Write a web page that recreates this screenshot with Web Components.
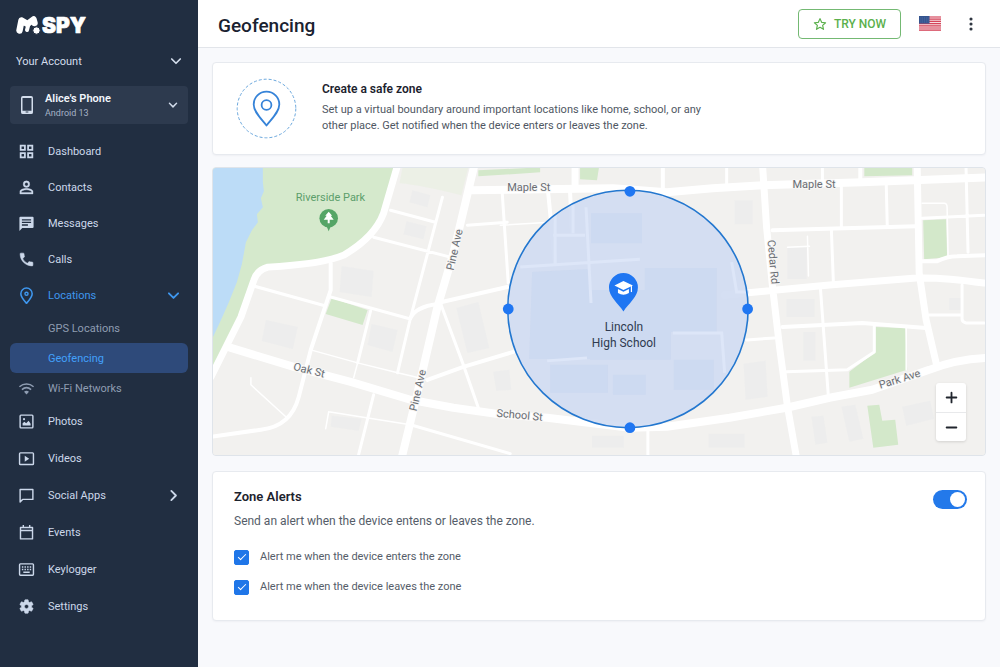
<!DOCTYPE html>
<html lang="en">
<head>
<meta charset="utf-8">
<meta name="viewport" content="width=device-width, initial-scale=1">
<title>Geofencing</title>
<style>
  html, body { margin: 0; }
  body { font-family: Roboto, "Liberation Sans", sans-serif; font-size: 11px; color: #1b2230; background: #f8f9fc; }
</style>
</head>
<body>
<spy-app></spy-app>

<script>
const ICONS = {
  dashboard: '<path fill-rule="evenodd" d="M2.500 2.500h8.500v8.500H2.500zm2.500 2.500v3.500h3.500V5zM13 2.500h8.500v8.500H13zm2.500 2.500v3.500H19V5zM2.500 13h8.500v8.500H2.500zM5 15.500V19h3.500v-3.500zM13 13h8.500v8.500H13zm2.500 2.500V19H19v-3.500z"/>',
  contacts: '<path d="M12 5.900a2.100 2.100 0 1 1 0 4.200 2.100 2.100 0 0 1 0-4.200m0 9c3 0 6.100 1.500 6.100 2.100v1.100H5.900V17c0-.6 3.100-2.100 6.100-2.100M12 4a4 4 0 1 0 0 8 4 4 0 0 0 0-8m0 9c-2.700 0-8 1.300-8 4v3h16v-3c0-2.700-5.300-4-8-4" transform="translate(-2 -2) scale(1.160)" stroke="currentColor" stroke-width=".4"/>',
  messages: '<path fill-rule="evenodd" d="M3.500 2.500h17A1.500 1.500 0 0 1 22 4v13a1.500 1.500 0 0 1-1.500 1.500H6L2 22.500V4a1.500 1.500 0 0 1 1.500-1.500zM5.500 6v1.800h13V6zm0 3.600v1.800h13V9.600zm0 3.600V15H14v-1.800z"/>',
  calls: '<path d="M6.600 10.800c1.400 2.800 3.800 5.100 6.600 6.600l2.200-2.200c.3-.3.700-.4 1-.2 1.100.4 2.300.6 3.600.6.600 0 1 .4 1 1V20c0 .6-.4 1-1 1C10.600 21 3 13.400 3 4c0-.6.400-1 1-1h3.500c.6 0 1 .4 1 1 0 1.200.2 2.400.6 3.600.1.300 0 .7-.2 1z" stroke="currentColor" stroke-width=".8"/>',
  pin: '<path d="M12 23C8.500 19 4 14.300 4 9.500a8 8 0 0 1 16 0c0 4.800-4.500 9.500-8 13.500z" fill="none" stroke="currentColor" stroke-width="2.200" stroke-linejoin="round"/><circle cx="12" cy="9.500" r="2.200" fill="none" stroke="currentColor" stroke-width="2"/>',
  wifi: '<path d="M2 9.500c6-5 14-5 20 0M5.500 13.500c4-3.300 9-3.300 13 0" fill="none" stroke="currentColor" stroke-width="2.200"/><path d="M8.500 16.500c2.200-1.800 4.800-1.800 7 0L12 20.500z"/>',
  photos: '<rect x="3" y="3" width="18" height="18" rx="1.200" fill="none" stroke="currentColor" stroke-width="2"/><path d="M6.500 17.500v-3l2.500-2 2.500 2 3.500-3.500 2.800 4v2.500z"/><circle cx="8.500" cy="8.700" r="1.500"/>',
  videos: '<rect x="2.200" y="4" width="19.600" height="16.500" rx="1.200" fill="none" stroke="currentColor" stroke-width="2"/><path d="M9.500 8v8.500l6.300-4.200z"/>',
  social: '<path d="M3 3.500h18v14H6.500L3 21z" fill="none" stroke="currentColor" stroke-width="2" stroke-linejoin="round"/>',
  events: '<path d="M3.500 5h17v16h-17zM3.500 9.200h17M7.500 1.500V5M16.500 1.500V5" fill="none" stroke="currentColor" stroke-width="2" stroke-linejoin="round"/>',
  keylogger: '<rect x="2.200" y="4" width="19.600" height="16" rx="1.200" fill="none" stroke="currentColor" stroke-width="2"/><path d="M5.500 7.500h2v2h-2zm3.700 0h2v2h-2zm3.700 0h2v2h-2zm3.700 0h2v2h-2zM5.500 11h2v2h-2zm3.700 0h2v2h-2zm3.700 0h2v2h-2zm3.700 0h2v2h-2zM7.500 14.800h9v2h-9z"/>',
  settings: '<path d="M19.140 12.940c.04-.3.060-.61.060-.94 0-.32-.02-.64-.07-.94l2.030-1.580a.49.490 0 0 0 .12-.61l-1.920-3.320a.49.490 0 0 0-.59-.22l-2.390.96c-.5-.38-1.030-.7-1.620-.94l-.36-2.540a.48.480 0 0 0-.48-.41h-3.840c-.24 0-.43.170-.47.410l-.36 2.540c-.59.240-1.130.570-1.620.940l-2.390-.96c-.22-.08-.47 0-.59.220L2.740 8.870c-.12.210-.08.470.12.610l2.030 1.580c-.05.300-.09.630-.09.940s.02.640.070.940l-2.030 1.580a.49.490 0 0 0-.12.610l1.920 3.320c.12.220.370.290.590.220l2.390-.96c.5.380 1.030.7 1.620.940l.36 2.540c.05.240.240.410.480.410h3.840c.24 0 .44-.17.470-.41l.36-2.540c.59-.24 1.130-.56 1.620-.94l2.390.96c.22.080.470 0 .59-.22l1.920-3.320a.49.490 0 0 0-.12-.61zM12 15a3 3 0 1 1 0-6 3 3 0 0 1 0 6z" stroke="currentColor" stroke-width=".8"/>',
  phone: '<path fill-rule="evenodd" d="M6.500 0h11A2.500 2.500 0 0 1 20 2.500v19a2.500 2.500 0 0 1-2.500 2.500h-11A2.500 2.500 0 0 1 4 21.500v-19A2.500 2.500 0 0 1 6.500 0zM6 2.800v16.700h12V2.800zm4.200 17.700V22h3.600v-1.500z"/>',
  down: '<path d="M3.500 8 12 16.500 20.500 8" fill="none" stroke="currentColor" stroke-width="3.400" stroke-linecap="round" stroke-linejoin="round"/>',
  right: '<path d="M8 3.500l8.500 8.500L8 20.500" fill="none" stroke="currentColor" stroke-width="3.400" stroke-linecap="round" stroke-linejoin="round"/>',
  star: '<path d="M12 2.800l2.800 6.300 6.800.7-5.100 4.600 1.500 6.800-6-3.500-6 3.500 1.500-6.800-5.100-4.600 6.800-.7z" fill="none" stroke="currentColor" stroke-width="2" stroke-linejoin="round"/>',
  more: '<circle cx="12" cy="3.500" r="2.700"/><circle cx="12" cy="12" r="2.700"/><circle cx="12" cy="20.500" r="2.700"/>',
  plus: '<path d="M12 3v18M3 12h18" stroke="currentColor" stroke-width="3.400" stroke-linecap="round"/>',
  minus: '<path d="M3 12h18" stroke="currentColor" stroke-width="3.400" stroke-linecap="round"/>'
};

function define(name, html, setup) {
  const template = document.createElement('template');
  template.innerHTML = html;
  customElements.define(name, class extends HTMLElement {
    constructor() {
      super();
      this.attachShadow({ mode: 'open' }).append(template.content.cloneNode(true));
    }
    connectedCallback() { if (setup) setup(this, this.shadowRoot); }
  });
}

define('spy-icon', `
<style>
  :host { display: inline-flex; flex: none; width: var(--size, 18px); height: var(--size, 18px); }
  svg { width: 100%; height: 100%; fill: currentColor; }
</style>
<svg viewBox="0 0 24 24" aria-hidden="true"></svg>`,
(host, root) => { root.querySelector('svg').innerHTML = ICONS[host.getAttribute('name')] || ''; });

define('spy-logo', `
<style>
  :host { display: block; height: 32px; }
  svg { display: block; width: 90px; height: 32px; }
  text { font: 900 21px Inter, "Liberation Sans", sans-serif; fill: #fff; stroke: #fff; stroke-width: .7; stroke-linejoin: round; }
</style>
<svg viewBox="0 0 90 32" role="img" aria-label="mSpy">
  <path d="M3.500 21.500 5.500 11.500 11.500 15 17.500 10.500 18.500 14" fill="none" stroke="#fff" stroke-width="6.400" stroke-linecap="round" stroke-linejoin="round"/>
  <path d="M12 17 11 21" stroke="#fff" stroke-width="4" stroke-linecap="round"/>
  <circle cx="20.500" cy="21.500" r="3.700" fill="#fff" stroke="#212e41"/>
  <text x="26" y="24">SPY</text>
</svg>`);

define('nav-item', `
<style>
  :host { display: block; }
  a { display: flex; align-items: center; gap: 13px; height: var(--row, 36px); padding: 0 8px; border-radius: 6px;
      color: #ccd8ea; font-size: 11px; text-decoration: none; }
  .label { flex: 1; }
  .icon { display: flex; width: 17px; --size: 17px; }
  .arrow { --size: 13px; display: flex; }
  :host([sub]) a { height: 30px; color: #8f9db2; }
  :host([open]) a { color: #3f97ee; }
  :host([current]) a { background: #2e4a7a; color: #42a0fa; }
</style>
<a href="#"><span class="icon"></span><span class="label"><slot></slot></span><span class="arrow"></span></a>`,
(host, root) => {
  const put = (cls, name) => { if (name) root.querySelector(cls).innerHTML = '<spy-icon name="' + name + '"></spy-icon>'; };
  put('.icon', host.getAttribute('icon'));
  put('.arrow', host.getAttribute('arrow'));
  if (host.hasAttribute('current')) root.querySelector('a').setAttribute('aria-current', 'page');
});

define('spy-sidebar', `
<style>
  :host { display: block; box-sizing: border-box; background: #212e41; color: #d3ddec; padding: 9px 10px 24px; }
  spy-logo { margin-left: 6px; }
  button { display: flex; align-items: center; width: 100%; border: 0; background: none; color: inherit; font: inherit; text-align: left; cursor: pointer; }
  .account { height: 24px; margin: 8px 0 13px; padding: 0 6px; --size: 12px; }
  .account span { flex: 1; }
  .device { box-sizing: border-box; height: 38px; padding: 0 10px 0 8px; gap: 9px; border-radius: 4px; background: #2d3a4e; }
  .device .phone { --size: 18px; }
  .device .caret { --size: 10px; }
  .device > span { flex: 1; display: grid; gap: 2px; }
  strong { font-weight: 600; font-size: 11px; line-height: 13px; color: #f2f6fc; }
  small { font-size: 9px; line-height: 12px; color: #a5b2c6; }
  nav { margin-top: 9px; }
  .lower { --row: 37px; }
</style>
<spy-logo></spy-logo>
<button class="account" type="button"><span>Your Account</span><spy-icon name="down"></spy-icon></button>
<button class="device" type="button">
  <spy-icon class="phone" name="phone"></spy-icon>
  <span><strong>Alice's Phone</strong><small>Android 13</small></span>
  <spy-icon class="caret" name="down"></spy-icon>
</button>
<nav aria-label="Main">
  <nav-item icon="dashboard">Dashboard</nav-item>
  <nav-item icon="contacts">Contacts</nav-item>
  <nav-item icon="messages">Messages</nav-item>
  <nav-item icon="calls">Calls</nav-item>
  <nav-item icon="pin" arrow="down" open>Locations</nav-item>
  <nav-item sub>GPS Locations</nav-item>
  <nav-item sub current>Geofencing</nav-item>
  <nav-item sub icon="wifi">Wi-Fi Networks</nav-item>
  <div class="lower">
    <nav-item icon="photos">Photos</nav-item>
    <nav-item icon="videos">Videos</nav-item>
    <nav-item icon="social" arrow="right">Social Apps</nav-item>
    <nav-item icon="events">Events</nav-item>
    <nav-item icon="keylogger">Keylogger</nav-item>
    <nav-item icon="settings">Settings</nav-item>
  </div>
</nav>`);

define('us-flag', `
<style>
  :host { display: block; width: 22px; height: 15px; }
  svg { display: block; width: 100%; height: 100%; }
</style>
<svg viewBox="0 0 22 15" role="img" aria-label="United States">
  <rect width="22" height="15" fill="#f6dfe2"/>
  <path d="M0 1h22M0 3.200h22M0 5.400h22M0 7.600h22M0 9.800h22M0 12h22M0 14.200h22" stroke="#d5445a" stroke-width="1.200"/>
  <rect width="10.500" height="7.600" fill="#34548f"/>
  <path d="M1.500 2h8M1.500 4h8M1.500 6h8" stroke="#6d88bb" stroke-width=".6" stroke-dasharray=".8 1"/>
</svg>`);

define('page-header', `
<style>
  :host { display: flex; align-items: center; box-sizing: border-box; height: 48px; padding: 0 19px 0 20px; background: #fff; border-bottom: 1px solid #e2e5ea; }
  h1 { flex: 1; margin: 0; padding-top: 4px; font-size: 19px; line-height: 24px; font-weight: 500; color: #1a2230; }
  button { font: inherit; cursor: pointer; background: none; border: 0; padding: 0; }
  .try { display: flex; align-items: center; justify-content: center; gap: 7px; box-sizing: border-box; width: 103px; height: 30px;
         border: 1px solid #74b973; border-radius: 4px; color: #5bb04c; font-size: 12px; font-weight: 500; --size: 14px; }
  us-flag { margin: 0 20px 0 18px; }
  .more { display: flex; justify-content: center; width: 20px; color: #2f3641; --size: 14px; }
</style>
<h1><slot></slot></h1>
<button class="try" type="button"><spy-icon name="star"></spy-icon>TRY NOW</button>
<us-flag></us-flag>
<button class="more" type="button" aria-label="More"><spy-icon name="more"></spy-icon></button>`);

define('panel-card', `
<style>
  :host { display: block; background: #fff; border: 1px solid #e7eaef; border-radius: 4px; box-shadow: 0 1px 2px #1b22300a; }
</style>
<slot></slot>`);

define('safe-zone', `
<style>
  :host { display: block; }
  .row { display: flex; align-items: flex-start; gap: 25px; padding: 15px 23px; }
  .row > div { padding-top: 3px; }
  svg { flex: none; width: 61px; height: 61px; }
  h2 { margin: 0 0 5px; font-size: 12px; line-height: 16px; font-weight: 600; color: #1c222d; }
  p { margin: 0; max-width: 392px; font-size: 11px; line-height: 16px; color: #4f5763; }
</style>
<panel-card><div class="row">
  <svg viewBox="0 0 61 61" aria-hidden="true" fill="none" stroke="#3683d8">
    <circle cx="30.500" cy="30.500" r="29.300" stroke="#6aa7dd" stroke-dasharray="3 2"/>
    <path d="M30.500 47.500C24.500 40 17.700 33.500 17.700 26.500a12.800 12.800 0 0 1 25.600 0c0 7-6.800 13.500-12.800 21z" stroke-width="1.800" stroke-linejoin="round"/>
    <circle cx="30.500" cy="27" r="4.900" stroke-width="1.800"/>
  </svg>
  <div><h2>Create a safe zone</h2>
  <p>Set up a virtual boundary around important locations like home, school, or any other place. Get notified when the device enters or leaves the zone.</p></div>
</div></panel-card>`);

define('geo-map', `
<style>
  :host { display: block; position: relative; box-sizing: border-box; aspect-ratio: 774 / 289; overflow: hidden; border: 1px solid #dfe4ea; border-radius: 4px; background: #f2f1ef; }
  .map { display: block; width: 100%; height: 100%; }
  text { font-size: 11px; fill: #696d73; stroke: #f7f6f5; stroke-width: 2; paint-order: stroke; stroke-linejoin: round; }
  text.park { fill: #5c9e6b; stroke: none; }
  text.place { font-size: 12px; fill: #2f3b50; stroke: none; text-anchor: middle; }
  .zoom { position: absolute; right: 19px; bottom: 14px; display: grid; width: 30px; border-radius: 3px; background: #fff; box-shadow: 0 1px 3px #0002; }
  button { display: flex; align-items: center; justify-content: center; height: 29px; padding: 0; border: 0; background: none; color: #20252d; cursor: pointer; --size: 13px; }
  button + button { border-top: 1px solid #e8e9eb; }
</style>
<svg class="map" viewBox="212 167 774 289" preserveAspectRatio="xMidYMid slice" role="img" aria-label="Map of the zone around Lincoln High School">
  <rect x="212" y="167" width="774" height="289" fill="#f2f1ef"/>
  <path d="M212 167H395L383 213Q374 237 343 255Q322 264 267 267Q256 270 253 280L240 317 212 373z" fill="#d5e9cc"/>
  <path d="M212 167h50v15l1 9-3 7 2 9-6 7 1 8-6 8-6 12-4 22-5 18-8 20-8 18-8 17z" fill="#bcdcf7"/>
  <path d="M331 298l36 12-5 15-37-11zM865 167h48v8l-48 1zM924 220l23-1 1 38-23 2zM876 327l30 1 2 42-58 18v-16l26-20zM868 406l12-1 3 16 13-1 3 25-25 3zM580 167h19l-2 13-17-1zM478 170l62-3v5l-62 4z" fill="#d3e8ca"/>
  <path d="M402 167h66l-7 28q-40-10-62-12z" fill="#e9f0e2" opacity=".7"/>
  <path opacity=".4" fill="#e6e8ec" d="M412 190l18 5-3 12-18-5zM406 221l20 5-3 13-20-5zM341 266l32 5-2 26-32-5zM265 320l32 7-5 22-31-8zM371 324l26 6-5 22-25-7zM331 416l30 3-3 12-28-4zM456 308l22-6 11 46-22 5zM493 372l16-2 2 20-15 1zM735 200h18v24h-18zM788 247h19v32h-19zM787 299h28v18h-28zM804 332h12v29h-12zM744 364l22-3 2 36-22 3zM950 298h14v12h-14zM812 417l12-1 4 27-12 2zM842 407l14-2 8 34-14 3zM903 407l28-6 4 18-28 7zM709 434h36v14h-36zM592 436h32v12h-32z"/>
  <g fill="none" stroke="#fff" stroke-linejoin="round" stroke-linecap="round">
    <path stroke-width="1.500" d="M310 350l47 13 40 10M328 412l82 13M328 412l-3 17M250 378v7l35 32M353 378l4-15M923 203h22q3 0 3 4l1 50M788 247l22-1M808 236l1 40M500 225l50-3M397 373l30 7M907 328v42"/>
    <path stroke-width="3" d="M390 210l45 12M373 237l77 20M442 197l-32 121-13 55M253 286l72 20M330 297l80 22M370 311l-13 52M373 395l-15 60M410 425l100 29M502 193l6 90M467 225l40-3M440 303l23 62 15 43M842 187v40M887 185l1 40M832 230l2 53M821 288l8 109M787 372l61-2 27-18v-27M747 340l28-2M923 218l62-3M967 168l2 84M930 315h33M963 285v34q0 3 4 4h18M823 168v14M648 430v26M727 168v18"/>
    <path stroke-width="4" d="M330 263v27l-20 60-12 47q-8 30-38 33l-50 7M410 318q5-11 27-14M437 303l70-16M427 380l36-13 50-15M773 230l144-4M783 327l80-4 64 5M923 261h15q10-5 20-5l28-1M861 168v14M663 168v20M548 192l7 71M570 192l2 41"/>
    <path stroke-width="7" d="M397 165L383 213Q374 237 343 255Q322 264 267 267Q256 270 253 280L240 317 210 377M575 166v22M763 165l4 62 6 60 7 60 8 60 9 51M918 165l2 108 7 47 10 43M725 295l52-5 53-5 87-7q25-1 68 5"/>
    <path stroke-width="8" d="M230 348l63 19 57 15 60 18 43 8 50 7 44 3 83 10 37-1 63-9 57-10 43-10 43-8 57-20q28-11 60-12M474 165l-21 88-16 54-20 86-16 66M472 190l141-2 54 4 46-4 50-3 100-3 124-5"/>
  </g>
  <ellipse cx="628" cy="309" rx="120.500" ry="119" fill="#d1dcf2" fill-opacity=".92"/>
  <path fill="#c6d6f0" opacity=".5" d="M591 213h51v30h-51zM532 272l58-3v90h-61zM645 268h72v64h-72zM550 365h58v28h-58zM613 375h33v20h-33zM590 290h56v70h-56zM646 332h25v28h-25zM674 360h40v30h-40z"/>
  <path fill="none" stroke="#dde6f8" stroke-width="3" d="M520 267l120-8M553 235h32M555 215v48M573 205v28M586 207l5 96M673 333h49l3 40M547 361l40-3M732 262l5 30h12"/>
  <ellipse cx="628" cy="309" rx="120.500" ry="119" fill="none" stroke="#2377cf" stroke-width="1.600"/>
  <g fill="#1f76f2"><circle cx="630" cy="191" r="5.400"/><circle cx="630" cy="428" r="5.400"/><circle cx="508" cy="309" r="5.400"/><circle cx="748" cy="309" r="5.400"/>
    <path d="M623.500 311.500C618 303 609 297 609 287.500a14.500 14.500 0 0 1 29 0c0 9.500-9 15.500-14.500 24z"/></g>
  <path d="M614.500 285.500l9-4.500 9.500 4.500-9.500 4.500zM618 289l5.500 2.700 5.500-2.700v4q-5.500 3.500-11 0z" fill="#fff"/>
  <path d="M631.500 286v6" stroke="#fff" stroke-width="1.200"/>
  <circle cx="328" cy="218" r="9.300" fill="#55a566"/><path d="M325.500 225h5l-2.500 6z" fill="#55a566"/>
  <path d="M328 211.500l3.500 4h-1.500l3 4h-4v3.500h-2v-3.500h-4l3-4h-1.500z" fill="#fff"/>
  <text class="park" x="295" y="201">Riverside Park</text>
  <text x="507" y="191">Maple St</text>
  <text x="793" y="188">Maple St</text>
  <text transform="translate(453 271) rotate(-77)">Pine Ave</text>
  <text transform="translate(416 412) rotate(-77)">Pine Ave</text>
  <text transform="translate(292 370) rotate(14)">Oak St</text>
  <text transform="translate(496 417) rotate(5)">School St</text>
  <text transform="translate(768 240) rotate(85)">Cedar Rd</text>
  <text transform="translate(881 389) rotate(-17)">Park Ave</text>
  <text class="place" x="624" y="331">Lincoln</text>
  <text class="place" x="624" y="347">High School</text>
</svg>
<div class="zoom">
  <button type="button" aria-label="Zoom in"><spy-icon name="plus"></spy-icon></button>
  <button type="button" aria-label="Zoom out"><spy-icon name="minus"></spy-icon></button>
</div>`);

define('check-row', `
<style>
  :host { display: block; }
  label { display: flex; align-items: center; gap: 11px; line-height: 16px; color: #555d69; }
  input { appearance: none; display: grid; place-items: center; box-sizing: border-box; flex: none; width: 15px; height: 15px; margin: 0; border: 1px solid #9aa5b5; border-radius: 2px; }
  input:checked { background: #1f76e8; border-color: #1f76e8; }
  input:checked::after { content: ""; width: 7px; height: 3px; margin-bottom: 3px; border: solid #fff; border-width: 0 0 1px 1px; transform: rotate(-45deg); }
</style>
<label><input type="checkbox" checked><span><slot></slot></span></label>`);

define('toggle-switch', `
<style>
  :host { display: block; }
  input { appearance: none; display: flex; align-items: center; box-sizing: border-box; width: 34px; height: 19px; margin: 0; padding: 0 2px; border-radius: 10px; background: #b8c1cd; }
  input::after { content: ""; width: 15px; height: 15px; border-radius: 50%; background: #fff; }
  input:checked { justify-content: flex-end; background: #2379ea; }
</style>
<input type="checkbox" role="switch" aria-label="Zone alerts" checked>`);

define('zone-alerts', `
<style>
  :host { display: block; }
  .body { padding: 15px 18px 25px 21px; }
  header { display: flex; justify-content: space-between; align-items: flex-start; }
  toggle-switch { margin-top: 3px; }
  h2 { margin: 0 0 5px; font-size: 13px; line-height: 20px; font-weight: 600; color: #1c222d; }
  p { margin: 0; font-size: 12px; line-height: 18px; color: #555d69; }
  .checks { display: grid; gap: 14px; margin-top: 19px; }
</style>
<panel-card><div class="body">
  <header><div><h2>Zone Alerts</h2><p>Send an alert when the device entens or leaves the zone.</p></div><toggle-switch></toggle-switch></header>
  <div class="checks">
    <check-row>Alert me when the device enters the zone</check-row>
    <check-row>Alert me when the device leaves the zone</check-row>
  </div>
</div></panel-card>`);

define('spy-app', `
<style>
  :host { display: grid; grid-template-columns: 198px minmax(0, 1fr); min-height: 100vh; }
  .content { display: grid; padding: 14px; }
  geo-map { margin: 12px 0 15px; }
</style>
<spy-sidebar></spy-sidebar>
<main>
  <page-header>Geofencing</page-header>
  <div class="content">
    <safe-zone></safe-zone>
    <geo-map></geo-map>
    <zone-alerts></zone-alerts>
  </div>
</main>`);
</script>
</body>
</html>
